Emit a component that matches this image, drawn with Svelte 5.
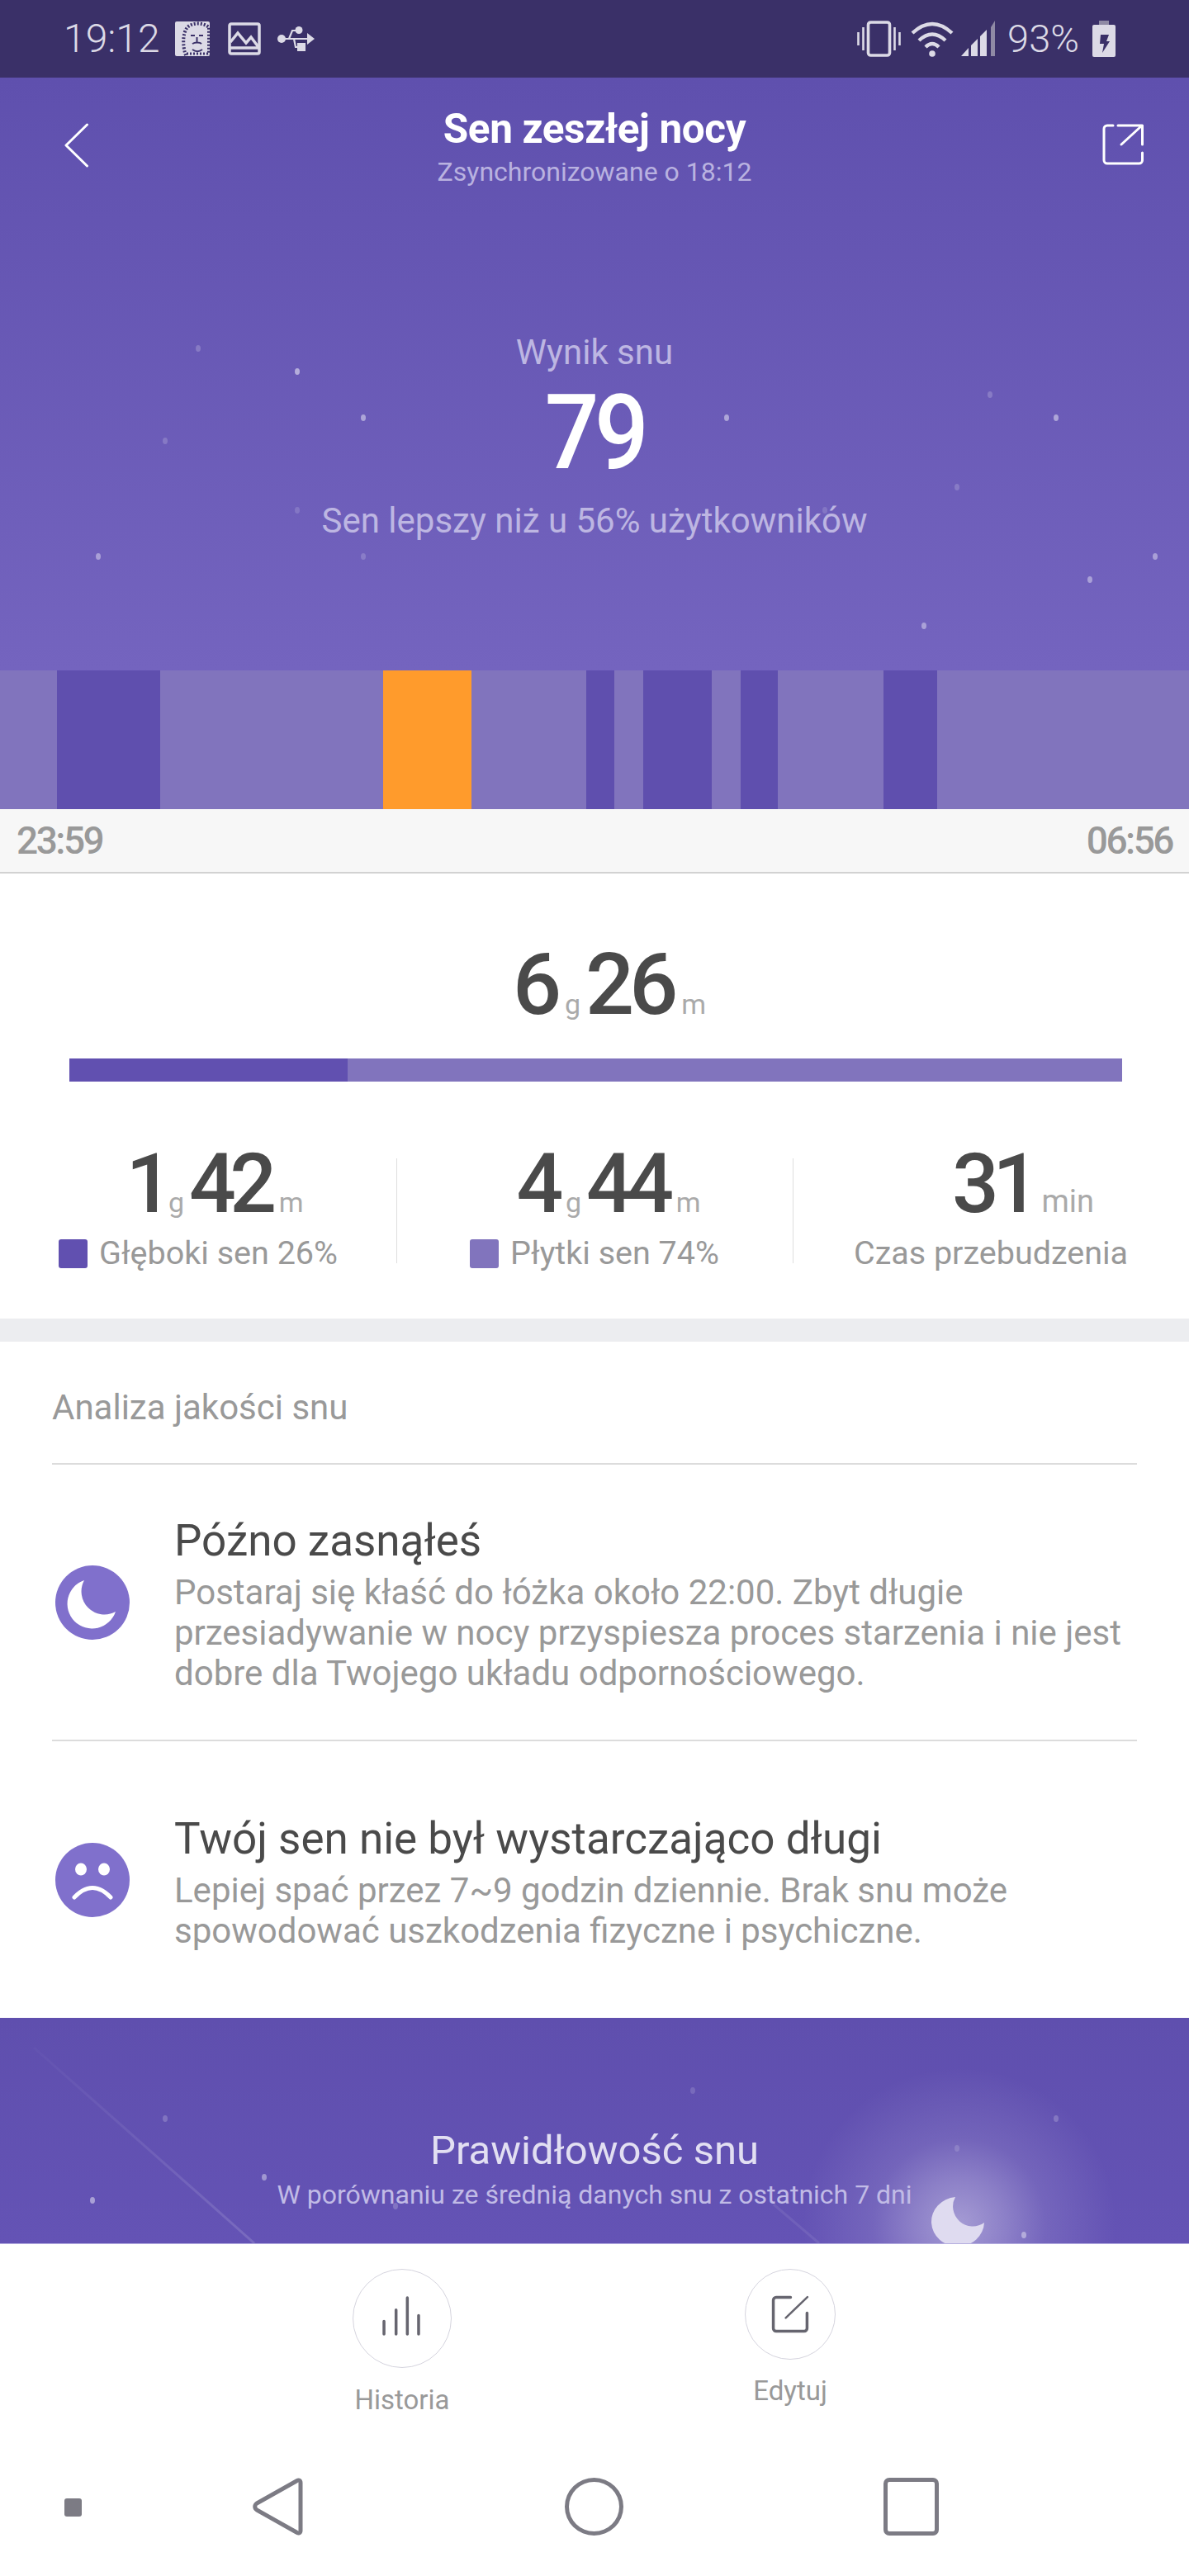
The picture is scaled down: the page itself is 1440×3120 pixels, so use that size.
<script>
  const segments = [
    [69, 'light'], [125, 'dark'], [270, 'light'], [107, 'orange'], [139, 'light'], [34, 'dark'], [35, 'light'],
    [83, 'dark'], [35, 'light'], [45, 'dark'], [128, 'light'], [65, 'dark'], [305, 'light']
  ];
  const heroStars = [
    [240, 328, 0.2], [360, 356, 0.5], [440, 412, 0.45], [200, 440, 0.18], [880, 412, 0.45], [1199, 384, 0.2],
    [1279, 412, 0.45], [1159, 496, 0.18], [360, 524, 0.15], [999, 524, 0.15], [119, 580, 0.4], [440, 580, 0.18],
    [1399, 580, 0.4], [1320, 608, 0.4], [1119, 664, 0.4]
  ];
  const bandStars = [
    [839, 88, 0.15], [200, 122, 0.2], [1279, 122, 0.2], [320, 193, 0.4], [112, 221, 0.45], [479, 228, 0.2],
    [1159, 158, 0.15], [1240, 263, 0.4]
  ];
</script>

<div class="app">
  <div class="status">
    <span class="clock">19:12</span>
    <svg class="ic-lion" width="42" height="42" viewBox="0 0 42 42">
      <rect width="42" height="42" rx="2" fill="#dcdae6" />
      <path d="M13 41C9 30 9 14 15 7c6-6 19-6 26 0v33" fill="none" stroke="#3a3068" stroke-width="4" stroke-dasharray="2 2" />
      <path d="M19 17h5M29 17h5M26.500 19v7M21 34c4 3 8 3 12 0M21 27c3-2 9-2 11 0" fill="none" stroke="#3a3068" stroke-width="2" />
      <path d="M14 39h26" stroke="#3a3068" stroke-width="3" stroke-dasharray="2 2" />
    </svg>
    <svg class="ic-image" width="40" height="40" viewBox="0 0 40 40" fill="none" stroke="#dcdae6" stroke-width="3.5">
      <rect x="2" y="2" width="36" height="36" rx="2" />
      <path d="M3 24 12 13l10 12 6-7 9 12M3 31h34" />
    </svg>
    <svg class="ic-usb" width="45" height="30" viewBox="0 0 45 30" fill="#dcdae6">
      <circle cx="5" cy="15" r="5" />
      <circle cx="26" cy="4.5" r="4.5" />
      <rect x="24" y="20" width="10" height="10" />
      <path d="M36 8l9 7-9 7z" />
      <path d="M5 15h33M14 15l4-10h8M20 15l2 10h4" fill="none" stroke="#dcdae6" stroke-width="2.2" />
    </svg>
    <div class="status-right">
      <svg width="53" height="44" viewBox="0 0 53 44" fill="none" stroke="#dcdae6">
        <rect x="13.5" y="2" width="26" height="40" rx="3" stroke-width="3.6" />
        <path d="M7.5 8v28M45.5 8v28M1.5 14v16M51.5 14v16" stroke-width="2.6" />
      </svg>
      <svg class="ic-wifi" width="52" height="44" viewBox="0 0 52 44" fill="none" stroke="#dcdae6" stroke-width="4.4">
        <path d="M2 15Q26-7 50 15M10 24Q26 9 42 24M18 32Q26 24 34 32" />
        <circle cx="26" cy="40" r="3.8" fill="#dcdae6" stroke="none" />
      </svg>
      <svg class="ic-signal" width="45" height="44" viewBox="0 0 45 44" fill="#dcdae6">
        <path d="M0 43 9 33V43zM12 43V30l8-8V43zM23 43V19l8-8V43z" />
        <path d="M36 43V8l5-8V43z" fill="#8f8aa5" />
      </svg>
      <span class="pct">93%</span>
      <svg class="ic-batt" width="28" height="44" viewBox="0 0 28 44">
        <rect x="8" width="12" height="5" fill="#8f8aa5" />
        <rect y="5" width="28" height="39" rx="2" fill="#dcdae6" />
        <path d="M10 17h10l-3 8h4l-9 14 2-11H9z" fill="#3a3068" />
      </svg>
    </div>
  </div>

  <section class="hero">
    <svg class="deco" width="1440" height="718" viewBox="0 0 1440 718">
      {#each heroStars as [x, y, o]}
        <ellipse cx={x} cy={y} rx="3" ry="4" fill="#fff" opacity={o} />
      {/each}
    </svg>
    <div class="topnav">
      <svg class="back" width="30" height="54" viewBox="0 0 30 54" fill="none" stroke="#fff" stroke-width="3" stroke-linecap="round" stroke-linejoin="round">
        <path d="M27.5 2 2 27l25.5 25" />
      </svg>
      <div class="heading">
        <h1>Sen zeszłej nocy</h1>
        <p>Zsynchronizowane o 18:12</p>
      </div>
      <svg class="share" width="50" height="50" viewBox="0 0 50 50" fill="none" stroke="#fff" stroke-width="3" stroke-linecap="round" stroke-linejoin="round">
        <path d="M13 2H6a4 4 0 0 0-4 4v38a4 4 0 0 0 4 4h38.500a4 4 0 0 0 4-4v-9" />
        <path d="M19 2h29.500v23M23 25 47.500 2.500" />
      </svg>
    </div>
    <div class="score">
      <div class="score-label">Wynik snu</div>
      <div class="score-value">79</div>
      <div class="score-note">Sen lepszy niż u 56% użytkowników</div>
    </div>
  </section>

  <div class="chart">
    {#each segments as [w, kind]}
      <div class="seg {kind}" style="width:{w}px"></div>
    {/each}
  </div>
  <div class="times"><span>23:59</span><span>06:56</span></div>

  <section class="summary">
    <div class="total">
      <span class="num">6</span><span class="unit">g</span><span class="num">26</span><span class="unit">m</span>
    </div>
    <div class="bar"><div class="bar-deep"></div><div class="bar-light"></div></div>
    <div class="stats">
      <div class="stat s1">
        <div class="row"><span class="num n">1</span><span class="unit u1">g</span><span class="num n">42</span><span class="unit">m</span></div>
        <div class="label"><i class="sw deep"></i>Głęboki sen 26%</div>
      </div>
      <div class="stat s2">
        <div class="row"><span class="num n">4</span><span class="unit">g</span><span class="num n">44</span><span class="unit">m</span></div>
        <div class="label"><i class="sw shallow"></i>Płytki sen 74%</div>
      </div>
      <div class="stat s3">
        <div class="row"><span class="num n">31</span><span class="unit min">min</span></div>
        <div class="label">Czas przebudzenia</div>
      </div>
    </div>
  </section>

  <div class="gap"></div>

  <section class="analysis">
    <div class="a-head">Analiza jakości snu</div>
    <div class="item first">
      <svg class="a-icon" width="90" height="90" viewBox="0 0 90 90">
        <circle cx="45" cy="45" r="45" fill="#8070cc" />
        <path d="M35 18A30 30 0 1 0 73 56A28 28 0 0 1 35 18z" fill="#fff" />
      </svg>
      <div class="a-text">
        <h2>Późno zasnąłeś</h2>
        <p>Postaraj się kłaść do łóżka około 22:00. Zbyt długie przesiadywanie w nocy przyspiesza proces starzenia i nie jest dobre dla Twojego układu odpornościowego.</p>
      </div>
    </div>
    <div class="item second">
      <svg class="a-icon" width="90" height="90" viewBox="0 0 90 90">
        <circle cx="45" cy="45" r="45" fill="#8070cc" />
        <ellipse cx="31" cy="32" rx="7" ry="7.500" fill="#fff" />
        <ellipse cx="59" cy="32" rx="7" ry="7.500" fill="#fff" />
        <path d="M23 66Q45 43 67 66" fill="none" stroke="#fff" stroke-width="5" stroke-linecap="round" />
      </svg>
      <div class="a-text">
        <h2>Twój sen nie był wystarczająco długi</h2>
        <p>Lepiej spać przez 7~9 godzin dziennie. Brak snu może spowodować uszkodzenia fizyczne i psychiczne.</p>
      </div>
    </div>
  </section>

  <section class="band">
    <svg class="deco" width="1440" height="273" viewBox="0 0 1440 273">
      <defs>
        <radialGradient id="glow" gradientUnits="userSpaceOnUse" cx="1162" cy="250" r="190">
          <stop offset="0" stop-color="#fff" stop-opacity="0.42" />
          <stop offset="0.3" stop-color="#fff" stop-opacity="0.26" />
          <stop offset="0.55" stop-color="#fff" stop-opacity="0.11" />
          <stop offset="1" stop-color="#fff" stop-opacity="0" />
        </radialGradient>
        <linearGradient id="streak" gradientUnits="userSpaceOnUse" x1="41" y1="36" x2="308" y2="273">
          <stop offset="0" stop-color="#fff" stop-opacity="0.02" />
          <stop offset="1" stop-color="#fff" stop-opacity="0.14" />
        </linearGradient>
      </defs>
      <rect width="1440" height="273" fill="url(#glow)" />
      <path d="M41 36 308 273" stroke="url(#streak)" stroke-width="3" fill="none" />
      <path d="M937 226 992 273" stroke="#fff" stroke-opacity="0.08" stroke-width="3" fill="none" />
      {#each bandStars as [x, y, o]}
        <ellipse cx={x} cy={y} rx="3" ry="4" fill="#fff" opacity={o} />
      {/each}
      <path d="M1157 217A32 30 0 1 0 1192 248A24 24 0 0 1 1157 217z" fill="#dfdbf0" />
    </svg>
    <div class="band-title">Prawidłowość snu</div>
    <div class="band-sub">W porównaniu ze średnią danych snu z ostatnich 7 dni</div>
  </section>

  <section class="bottom">
    <div class="actions">
      <div class="act a1">
        <div class="circle">
          <svg width="117" height="117" viewBox="0 0 120 120" fill="none" stroke="#66656f" stroke-width="3.600" stroke-linecap="round">
            <path d="M38 64V80M53 50V80M67 35V80M81 57V80" />
          </svg>
        </div>
        <span>Historia</span>
      </div>
      <div class="act a2">
        <div class="circle">
          <svg width="107" height="107" viewBox="0 0 110 110" fill="none" stroke="#66656f" stroke-width="3.600" stroke-linecap="round">
            <path d="M56 34.500H38a3.500 3.500 0 0 0-3.500 3.500v35a3.500 3.500 0 0 0 3.500 3.500h35a3.500 3.500 0 0 0 3.500-3.500V54" />
            <path d="M77 34 50 60" stroke-width="2.600" />
          </svg>
        </div>
        <span>Edytuj</span>
      </div>
    </div>
    <div class="sysnav">
      <i class="dot"></i>
      <svg class="tri" width="61" height="70" viewBox="0 0 61 70" fill="none" stroke="#7c7b84" stroke-width="5">
        <path d="M58 6c0-3-3-4-5-2L5 31c-3 2-3 6 0 8l48 27c2 2 5 1 5-2z" stroke-linejoin="round" />
      </svg>
      <i class="ring"></i>
      <i class="box"></i>
    </div>
  </section>
</div>

<style>
  :global(body) { margin: 0; background: #fff; }
  .app {
    width: 1440px; height: 3120px; overflow: hidden; display: flex; flex-direction: column;
    font-family: Roboto, "Noto Sans", sans-serif; color: #999;
  }
  .status {
    height: 94px; flex: none; background: #3a3068; display: flex; align-items: center;
    padding: 0 89px 0 77px; box-sizing: border-box; color: #dcdae6;
  }
  .clock, .pct { font-weight: 300; line-height: 94px; }
  .clock { font-size: 48px; }
  .pct { font-size: 47px; margin-left: 11px; }
  .ic-lion { margin-left: 18px; }
  .ic-image { margin-left: 22px; }
  .ic-usb { margin-left: 20px; }
  .status-right { margin-left: auto; display: flex; align-items: center; }
  .ic-wifi { margin-left: 12px; }
  .ic-signal { margin-left: 9px; }
  .ic-batt { margin-left: 16px; }

  .hero {
    position: relative; height: 718px; flex: none; box-sizing: border-box; padding-top: 34px;
    background: linear-gradient(180deg, #5f50ae 0%, #7464bf 100%);
  }
  .deco { position: absolute; left: 0; top: 0; }
  .topnav {
    position: relative; display: grid; grid-template-columns: 1fr auto 1fr; height: 100px;
  }
  .back { margin: 21px 0 0 78px; }
  .share { justify-self: end; margin: 22px 55px 0 0; }
  .heading { text-align: center; }
  .heading h1 { margin: 0; font-size: 49.500px; line-height: 56px; font-weight: 700; color: #fff; letter-spacing: -0.4px; }
  .heading p { margin: 4px 0 0; font-size: 32px; line-height: 40px; color: #b9b2e0; }
  .score { position: relative; margin-top: 175px; text-align: center; }
  .score-label { font-size: 42px; line-height: 48px; color: #bdb6e2; }
  .score-value {
    margin-top: 10px; font-size: 126px; line-height: 126px; font-weight: 500; color: #fff;
    letter-spacing: -6px; transform: scaleX(0.92);
  }
  .score-note { margin-top: 20px; font-size: 42px; line-height: 48px; color: #bdb6e2; }

  .chart { height: 168px; flex: none; display: flex; }
  .seg.light { background: #8174bd; }
  .seg.dark { background: #5f4fae; }
  .seg.orange { background: #ff9b2c; }
  .times {
    height: 78px; flex: none; box-sizing: border-box; background: #f7f7f7; border-bottom: 2px solid #d2d2d2;
    display: flex; justify-content: space-between; align-items: center; padding: 0 20px;
    font-size: 46px; font-weight: 500; letter-spacing: -2.500px; color: #999;
  }

  .summary { height: 539px; flex: none; box-sizing: border-box; padding-top: 83px; }
  .total, .row { display: flex; align-items: baseline; justify-content: center; }
  .total { padding-left: 42px; }
  .num { font-size: 104px; line-height: 104px; font-weight: 500; color: #4a4a4a; letter-spacing: -6px; }
  .num.n { font-size: 100px; line-height: 100px; letter-spacing: -7.500px; }
  .unit { font-size: 34px; color: #aaa; margin: 0 6px 0 10px; }
  .unit.u1 { margin-left: 2px; }
  .unit.min { margin-left: 10px; margin-right: 0; font-size: 38px; }
  .bar { display: flex; height: 28px; margin: 37px 81px 0 84px; }
  .bar-deep { width: 337px; background: #6150b0; }
  .bar-light { flex: 1; background: #8174bd; }
  .stats { display: grid; grid-template-columns: repeat(3, 480px); margin-top: 74px; }
  .stat { position: relative; }
  .stat + .stat::before {
    content: ""; position: absolute; left: 0; top: 19px; bottom: 10px; width: 1px; background: #dedede;
  }
  .s1 .row { padding-left: 46px; }
  .s2 .row { padding-left: 40px; }
  .s3 .row { padding-left: 78px; }
  .label {
    display: flex; align-items: center; justify-content: center; gap: 14px;
    margin-top: 12px; font-size: 39.500px; line-height: 44px; color: #999;
  }
  .sw { width: 35px; height: 35px; border-radius: 3px; }
  .sw.deep { background: #6150b0; }
  .sw.shallow { background: #8174bd; }

  .gap { height: 28px; flex: none; background: #ecedf0; }

  .analysis { height: 819px; flex: none; box-sizing: border-box; padding: 58px 63px 0; }
  .a-head { font-size: 42px; line-height: 44px; color: #999; padding-bottom: 45px; border-bottom: 2px solid #dcdcdc; }
  .item { display: flex; align-items: center; gap: 54px; padding-left: 4px; box-sizing: border-box; height: 335px; }
  .item.first { border-bottom: 2px solid #dcdcdc; }
  .a-icon { flex: none; }
  .a-text { padding-top: 7px; }
  .a-text h2 { margin: 0; font-size: 53px; line-height: 58px; font-weight: 400; color: #4a4a4a; }
  .a-text p { margin: 9px 0 0; font-size: 42px; line-height: 49px; color: #999; }

  .band {
    position: relative; height: 274px; flex: none; box-sizing: border-box; padding-top: 133px; text-align: center;
    background: linear-gradient(180deg, #5f4fae 0%, #6453b5 100%); border-bottom: 1px solid #b5aee0;
  }
  .band-title { position: relative; font-size: 49px; line-height: 56px; color: #e2dff2; }
  .band-sub { position: relative; margin-top: 5px; font-size: 32px; line-height: 40px; color: #c1bbe6; }

  .bottom { flex: 1; padding-top: 30px; box-sizing: border-box; }
  .actions { display: flex; align-items: flex-start; padding-left: 427px; height: 177px; }
  .act { display: flex; flex-direction: column; align-items: center; font-size: 33px; line-height: 36px; color: #999; }
  .a1 { width: 120px; }
  .a2 { width: 110px; margin-left: 355px; }
  .circle { box-sizing: border-box; border: 1.500px solid #d5d4de; border-radius: 50%; display: flex; }
  .a1 .circle { width: 120px; height: 120px; margin-bottom: 21px; }
  .a2 .circle { width: 110px; height: 110px; margin-bottom: 20px; }
  .sysnav { display: flex; align-items: center; height: 70px; margin-top: 76px; padding-left: 78px; }
  .dot { width: 21px; height: 22px; border-radius: 3px; background: #7c7b84; margin-top: 2px; }
  .tri { margin-left: 207px; }
  .ring { width: 71px; height: 70px; box-sizing: border-box; border: 5.500px solid #7c7b84; border-radius: 50%; margin-left: 317px; }
  .box { width: 67px; height: 70px; box-sizing: border-box; border: 5.500px solid #7c7b84; border-radius: 7px; margin-left: 315px; }
</style>
